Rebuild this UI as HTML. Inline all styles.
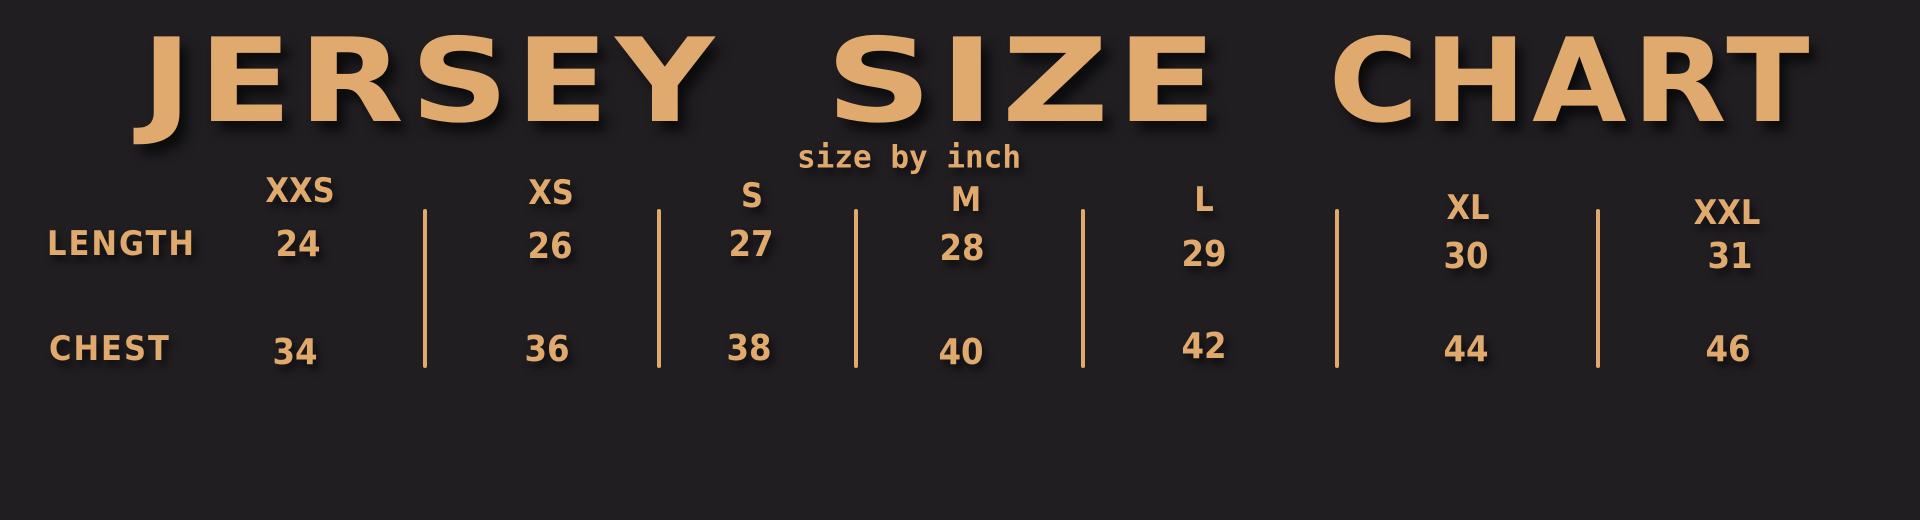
<!DOCTYPE html>
<html><head><meta charset="utf-8"><style>
html,body{margin:0;padding:0;background:#201e21;}
body{width:1920px;height:520px;position:relative;overflow:hidden;color:#e0a96d;font-family:"DejaVu Sans Condensed","DejaVu Sans",sans-serif;}
.t{position:absolute;transform:translate(-50%,-50%);white-space:nowrap;text-shadow:4px 6px 8px rgba(0,0,0,.6);line-height:1;font-weight:bold;}
.w{position:absolute;top:82px;font-weight:bold;font-size:116px;line-height:1;text-shadow:6px 10px 10px rgba(0,0,0,.65);white-space:nowrap;letter-spacing:5px;}
.h{font-size:34px;}
.v{font-size:36px;}
.lab{font-size:34px;transform:translate(0,-50%);letter-spacing:2px;}
.d{position:absolute;top:209px;width:4px;height:159px;background:#e0a96d;border-radius:2px;transform:translateX(-50%);}
</style></head><body>
<div class="w" style="left:431px;transform:translate(-50%,-50%) scaleX(1.31)">JERSEY</div>
<div class="w" style="left:1025px;transform:translate(-50%,-50%) scaleX(1.42)">SIZE</div>
<div class="w" style="left:1572px;transform:translate(-50%,-50%) scaleX(1.17)">CHART</div>
<div class="t" style="left:909px;top:158px;font-family:'DejaVu Sans Mono',monospace;font-size:31px;">size by inch</div>

<div class="t h" style="left:300px;top:191px">XXS</div>
<div class="t h" style="left:551px;top:193px">XS</div>
<div class="t h" style="left:752px;top:196px">S</div>
<div class="t h" style="left:966px;top:200px">M</div>
<div class="t h" style="left:1204px;top:200px">L</div>
<div class="t h" style="left:1468px;top:208px">XL</div>
<div class="t h" style="left:1727px;top:213px">XXL</div>

<div class="t lab" style="left:47px;top:244px">LENGTH</div>
<div class="t lab" style="left:49px;top:349px">CHEST</div>

<div class="t v" style="left:298px;top:245px">24</div>
<div class="t v" style="left:550px;top:247px">26</div>
<div class="t v" style="left:751px;top:245px">27</div>
<div class="t v" style="left:962px;top:249px">28</div>
<div class="t v" style="left:1204px;top:255px">29</div>
<div class="t v" style="left:1466px;top:257px">30</div>
<div class="t v" style="left:1730px;top:257px">31</div>

<div class="t v" style="left:295px;top:353px">34</div>
<div class="t v" style="left:547px;top:350px">36</div>
<div class="t v" style="left:749px;top:349px">38</div>
<div class="t v" style="left:961px;top:353px">40</div>
<div class="t v" style="left:1204px;top:347px">42</div>
<div class="t v" style="left:1466px;top:350px">44</div>
<div class="t v" style="left:1728px;top:350px">46</div>

<div class="d" style="left:425px"></div>
<div class="d" style="left:659px"></div>
<div class="d" style="left:856px"></div>
<div class="d" style="left:1083px"></div>
<div class="d" style="left:1337px"></div>
<div class="d" style="left:1598px"></div>
</body></html>
